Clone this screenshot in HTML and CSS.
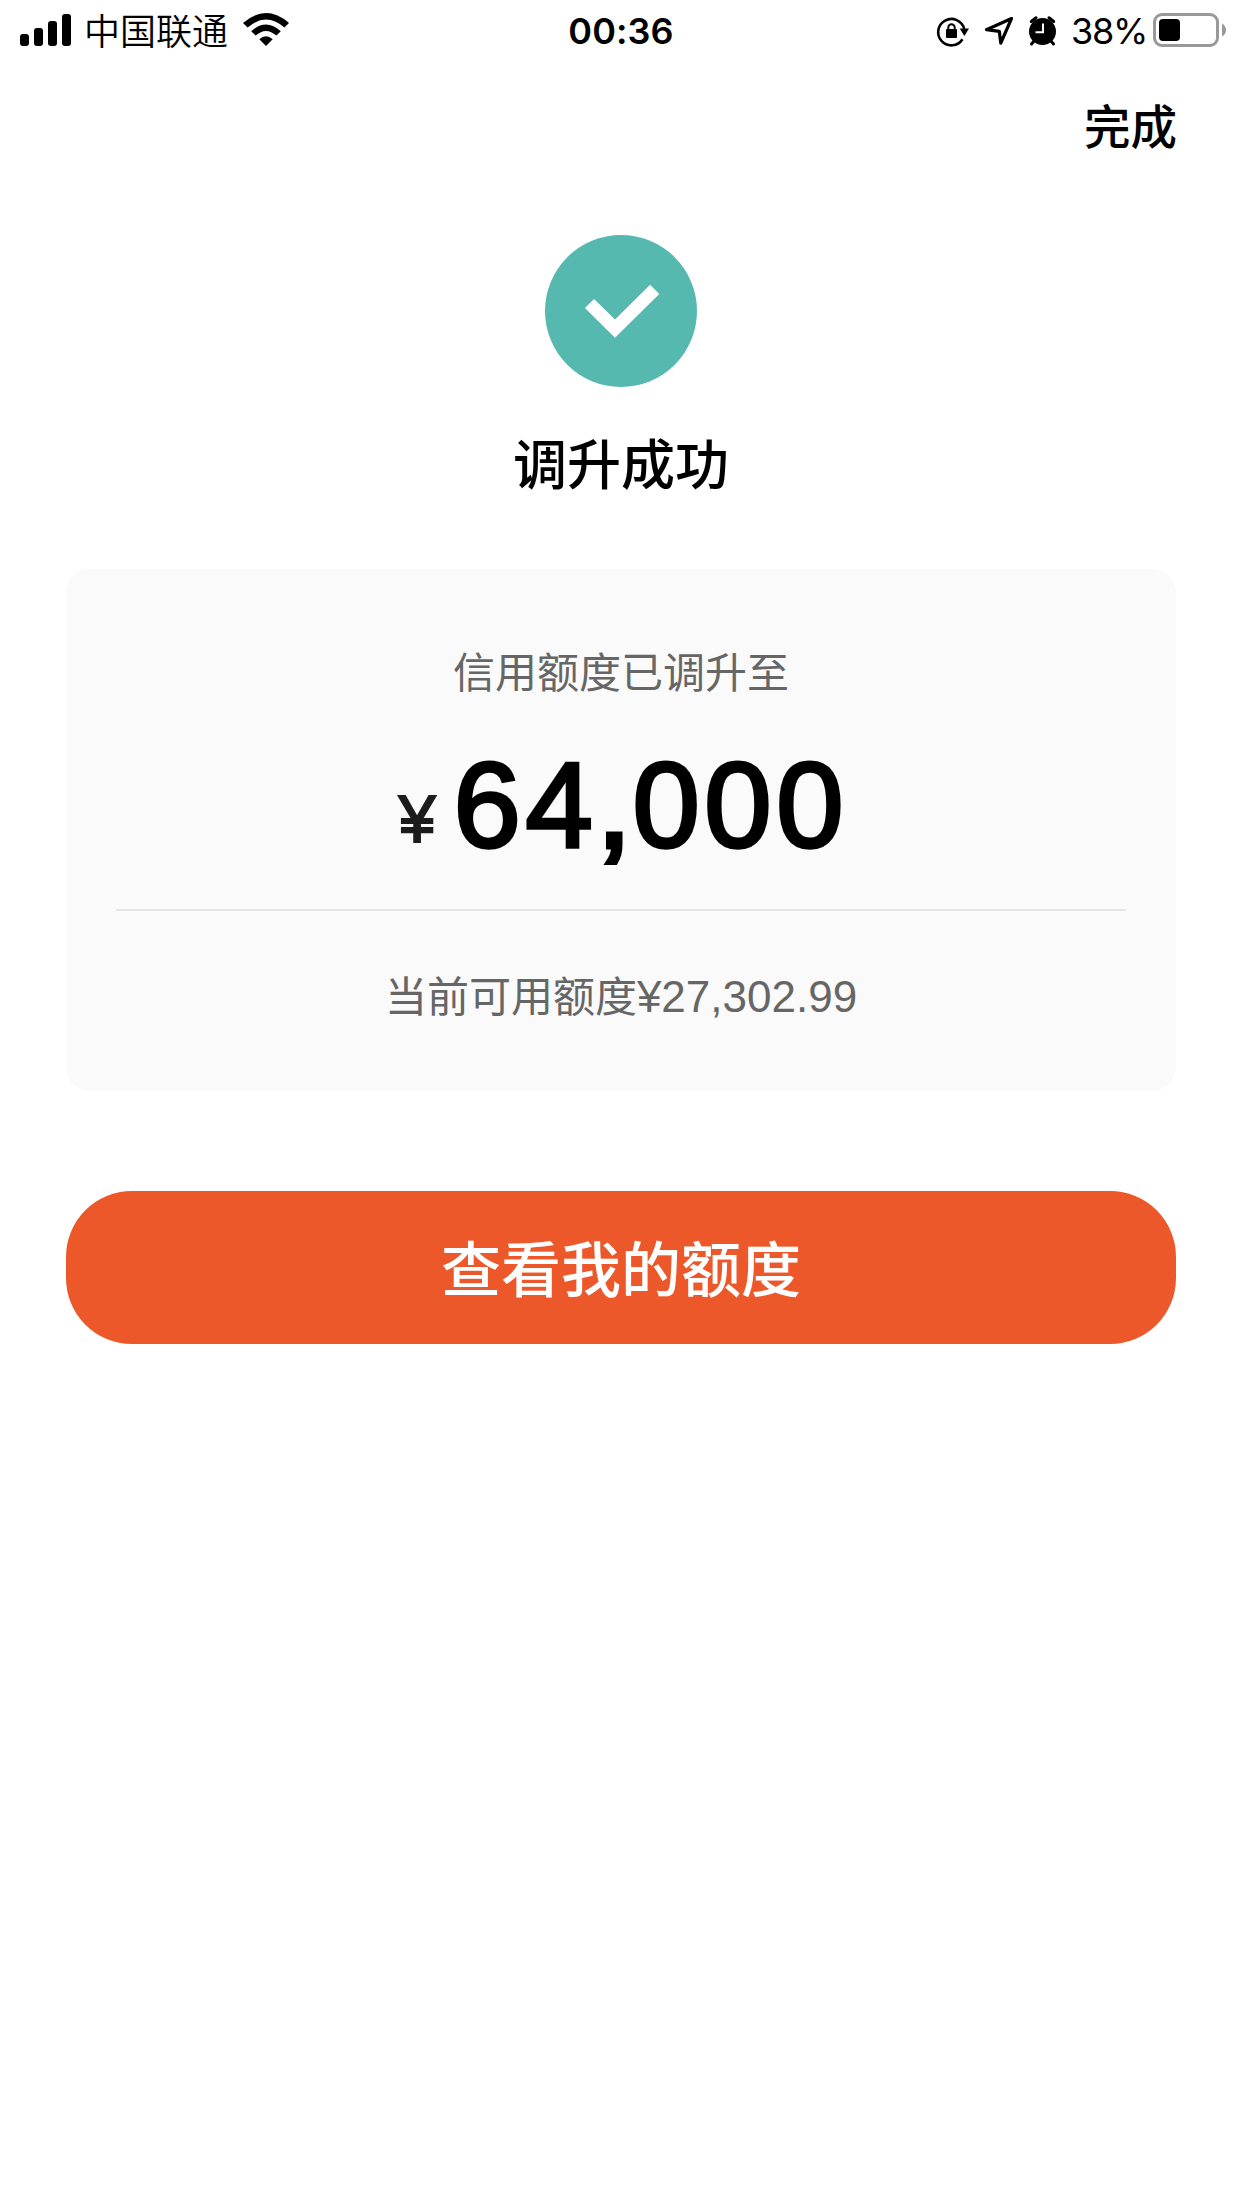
FILE: index.html
```html
<!DOCTYPE html>
<html lang="zh-CN">
<head>
<meta charset="utf-8">
<title>调升成功</title>
<link rel="stylesheet" href="styles.css">
</head>
<body>
<div class="screen">
  <header class="status">
    <div class="status-left">
      <svg class="signal" width="84" height="62" viewBox="0 0 84 62"><rect x="20" y="34" width="9" height="12" rx="3"/><rect x="34" y="28" width="9" height="18" rx="3"/><rect x="48" y="21" width="9" height="25" rx="3"/><rect x="62" y="14" width="9" height="32" rx="3"/></svg>
      <span class="carrier">中国联通</span>
      <svg class="wifi" width="72" height="62" viewBox="228 0 72 62"><path d="M266 46L259.3 39.3Q266 33.2 272.7 39.3Z"/><path d="M251.2 31.2Q266 17.8 280.8 31.2L276.4 35.6Q266 26.2 255.6 35.6Z"/><path d="M243 23Q266 3.2 289 23L284.4 27.6Q266 11.6 247.6 27.6Z"/></svg>
    </div>
    <span class="clock">00:36</span>
    <div class="status-right">
      <svg width="149" height="62" viewBox="922 0 149 62">
        <path class="thin" d="M962.5 39.3A13.2 13.2 0 1 1 964.2 29"/><path d="M959.7 28.5H969L964.4 36Z"/><rect x="946" y="29" width="11" height="9" rx="1"/><path class="shackle" d="M948.3 30V27.500a3.200 3.200 0 0 1 6.400 0V30"/>
        <path class="arrow" d="M1011.500 18.500L986.500 29.700L999.300 31.300L1000.800 43.200Z"/>
        <circle cx="1042.500" cy="31.500" r="13.500"/><path class="bell" d="M1031.300 21.500L1036 17.800M1053.700 21.500L1049 17.800M1034 41L1031.500 44M1051 41L1053.500 44"/><path class="hands" d="M1043 23.500V32.300H1035.500"/>
      </svg>
      <span class="percent">38%</span>
      <svg width="96" height="62" viewBox="1146 0 96 62"><rect class="shell" x="1154.500" y="14.500" width="63" height="31" rx="7.500"/><rect x="1159" y="19" width="21" height="22" rx="4"/><path class="cap" d="M1222 23.500Q1226 26 1226 30T1222 36.500Z"/></svg>
    </div>
  </header>
  <nav class="nav"><a class="done">完成</a></nav>
  <main class="content">
    <svg class="badge" width="152" height="152" viewBox="545 235 152 152"><circle cx="621" cy="311" r="76"/><path d="M589.500 303.500L615 328.700L654.700 289.400"/></svg>
    <h1 class="title">调升成功</h1>
    <section class="card">
      <p class="label">信用额度已调升至</p>
      <p class="amount"><span class="yen">¥</span><span class="value">64<span class="comma">,</span>000</span></p>
      <p class="available">当前可用额度<span class="num">¥27,302.99</span></p>
    </section>
    <button class="action">查看我的额度</button>
  </main>
</div>
</body>
</html>
```
FILE: styles.css
```css
* { box-sizing: border-box; }
body { margin: 0; background: #fff; color: #000; font-family: "Noto Sans CJK SC", sans-serif; }
p, h1 { margin: 0; }
svg { display: block; flex: none; }
.screen { height: 2208px; overflow: hidden; background: #fff; }

.status { display: grid; grid-template-columns: 1fr auto 1fr; height: 62px; line-height: 62px; font-size: 36px; }
.status-left, .status-right { display: flex; }
.status-right { justify-content: flex-end; }
.carrier { width: 144px; line-height: 58px; font-weight: 350; white-space: nowrap; }
.clock { font-family: Inter, sans-serif; font-weight: 600; letter-spacing: 0.1px; }
.percent { width: 75px; font-family: Inter, sans-serif; white-space: nowrap; letter-spacing: -1.2px; }
.thin, .shackle, .arrow, .bell, .hands, .shell { fill: none; stroke: #000; stroke-width: 2.6; }
.arrow { stroke-width: 3.2; stroke-linejoin: round; }
.bell { stroke-width: 3; stroke-linecap: round; }
.hands { stroke: #fff; stroke-width: 2; }
.shackle { stroke-width: 2; }
.shell { stroke: #999; stroke-width: 3; }
.cap { fill: #999; }

.nav { display: flex; justify-content: flex-end; padding-right: 65px; height: 173px; }
.done { font-size: 46.5px; line-height: 124px; font-weight: 500; }

.content { display: flex; flex-direction: column; align-items: center; padding: 0 66px; }
.badge circle { fill: #56b9af; }
.badge path { fill: none; stroke: #fff; stroke-width: 13; }
.title { margin-top: 35px; height: 80px; line-height: 80px; font-size: 54px; font-weight: 500; }
.card { align-self: stretch; margin-top: 67px; height: 522px; padding: 71px 50px 0; border-radius: 24px; background: #fafafa; text-align: center; }
.label { height: 60px; line-height: 60px; font-size: 42px; color: #666; }
.amount { display: flex; justify-content: center; align-items: baseline; height: 211px; padding-top: 35px; border-bottom: 2px solid #e6e6e6; line-height: 140px; font-family: "Liberation Sans", sans-serif; }
.yen { position: relative; top: -5px; margin-right: 18px; font-size: 66px; color: #1c1c1c; -webkit-text-stroke: 2px #1c1c1c; }
.value { margin-right: -5px; font-size: 121px; letter-spacing: 4.6px; -webkit-text-stroke: 3.6px #000; }
.comma { letter-spacing: 1.5px; -webkit-text-stroke-width: 5px; }
.available { margin-top: 53px; height: 60px; line-height: 60px; font-size: 42px; color: #666; }
.num { font-family: "Liberation Sans", sans-serif; font-size: 44px; }
.action { align-self: stretch; margin-top: 100px; height: 153px; padding: 0 0 4px; border: 0; border-radius: 66px; background: #ec582a; color: #fff; font: 500 60px/148px "Noto Sans CJK SC", sans-serif; }
```
